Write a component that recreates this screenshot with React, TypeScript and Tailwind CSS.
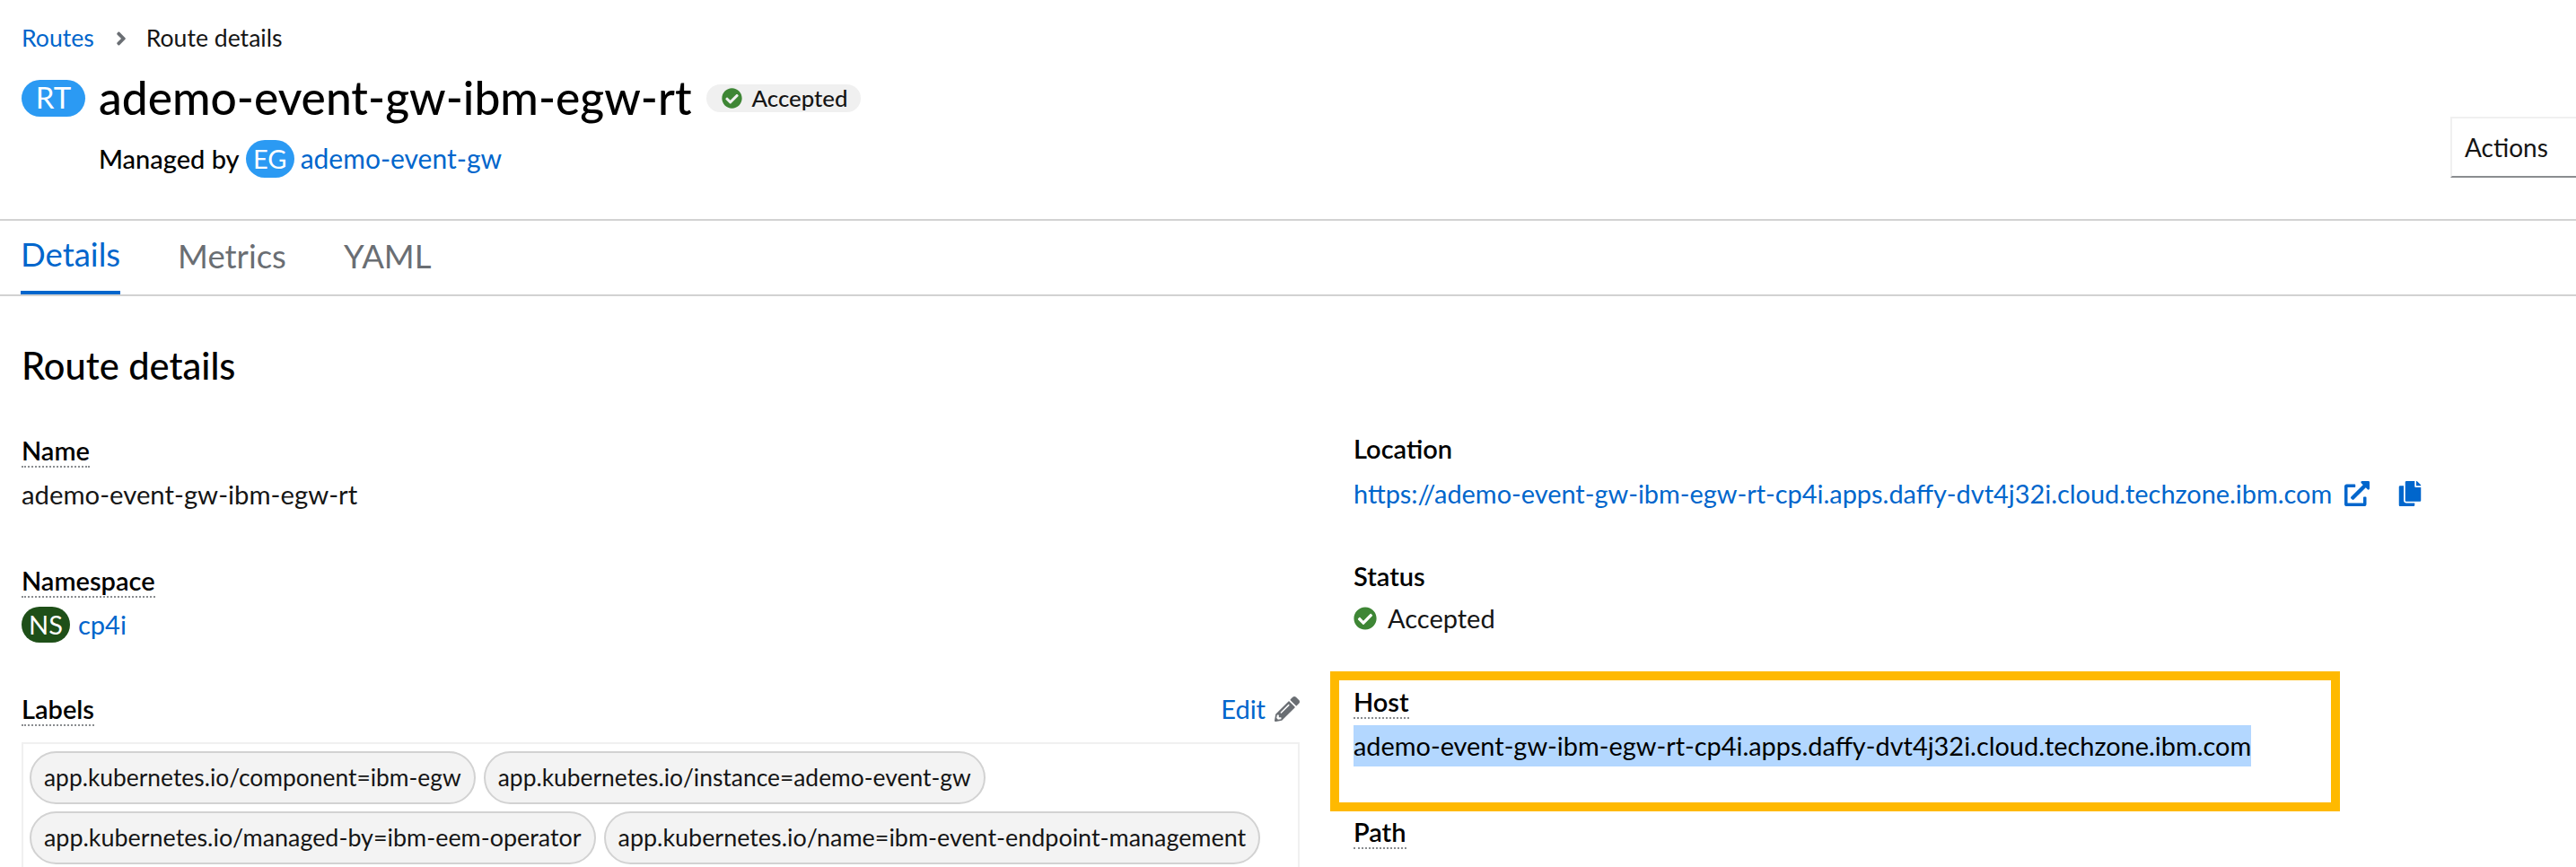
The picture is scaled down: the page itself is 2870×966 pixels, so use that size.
import React from 'react';
import { FaAngleRight, FaCheckCircle, FaCopy, FaExternalLinkAlt, FaPencilAlt } from 'react-icons/fa';

const Term: React.FC<{ children: React.ReactNode }> = ({ children }) => (
  <div className="h-[38px]">
    <span className="inline-block h-[34px] border-b-2 border-dotted border-[#8a8d90] text-[29px] font-semibold leading-[30px] text-black">
      {children}
    </span>
  </div>
);

const Badge: React.FC<{ text: string; className: string }> = ({ text, className }) => (
  <span className={`flex shrink-0 items-center justify-center rounded-full text-white ${className}`}>{text}</span>
);

const Chip: React.FC<{ text: string; size: string }> = ({ text, size }) => (
  <span className={`flex h-[59px] items-center rounded-[30px] border-2 border-[#d2d2d2] bg-[#f3f3f3] px-[14px] text-[#151515] ${size}`}>
    {text}
  </span>
);

const App: React.FC = () => {
  return (
    <div className="relative h-[966px] w-full overflow-hidden bg-white font-['Lato',sans-serif] text-[29px] text-[#151515]">
      {/* Page header */}
      <div className="relative h-[246px] border-b-2 border-[#d2d2d2] pl-[24px]">
        <div className="flex h-[84px] items-center pt-[2px] text-[26.6px]">
          <a className="text-[#06c]">Routes</a>
          <FaAngleRight className="ml-[22px] mr-[20px] h-[24px] w-[16px] text-[#6a6e73]" />
          <span>Route details</span>
        </div>
        <div className="flex h-[50px] items-center">
          <Badge text="RT" className="h-[41px] w-[71px] bg-[#2b9af3] text-[33px]" />
          <h1 className="ml-[15px] text-[51.5px] font-medium text-black">ademo-event-gw-ibm-egw-rt</h1>
          <span className="ml-[16px] flex h-[31px] w-[172px] items-center rounded-full bg-[#f0f0f0] pl-[17px] text-[25.8px] font-medium">
            <FaCheckCircle className="mr-[11px] h-[23px] w-[23px] text-[#3e8635]" />
            Accepted
          </span>
        </div>
        <div className="mt-[20px] flex items-center pl-[86px]">
          <span className="font-medium text-black">Managed by</span>
          <Badge text="EG" className="mx-[7px] h-[42px] w-[54px] bg-[#2b9af3] text-[29px]" />
          <a className="text-[30px] text-[#06c]">ademo-event-gw</a>
        </div>
        <button className="absolute right-0 top-[130px] flex h-[68px] w-[140px] items-center border-2 border-r-0 border-[#f0f0f0] border-b-[#8a8d90] pl-[14px] text-[28px]">
          Actions
        </button>
      </div>

      {/* Tabs */}
      <div className="flex h-[84px] gap-[64px] border-b-2 border-[#d2d2d2] pl-[23px] text-[36.5px] text-[#6a6e73]">
        <a className="flex h-[82px] items-center border-b-4 border-[#06c] pb-[4px] text-[#06c]">Details</a>
        <a className="flex h-[82px] items-center pb-[4px]">Metrics</a>
        <a className="flex h-[82px] items-center pb-[4px]">YAML</a>
      </div>

      {/* Details */}
      <div className="px-[24px] pt-[50px]">
        <h2 className="h-[70px] text-[41.6px] font-medium leading-[54px] text-black">Route details</h2>
        <div className="mt-[30px] grid grid-cols-[1424px_1fr] gap-x-[60px]">
          <div>
            <div className="h-[145px]">
              <Term>Name</Term>
              <div className="mt-[11px] text-[29.3px]">ademo-event-gw-ibm-egw-rt</div>
            </div>
            <div className="h-[143px]">
              <Term>Namespace</Term>
              <div className="mt-[11px] flex items-center">
                <Badge text="NS" className="h-[40px] w-[54px] bg-[#1e4f18] text-[29px]" />
                <a className="ml-[9px] text-[#06c]">cp4i</a>
              </div>
            </div>
            <div className="flex justify-between">
              <Term>Labels</Term>
              <a className="mt-[5px] flex h-[34px] items-center text-[#06c]">
                Edit
                <FaPencilAlt className="ml-[10px] h-[28px] w-[28px] text-[#6a6e73]" />
              </a>
            </div>
            <div className="mt-[20px] flex h-[200px] flex-wrap content-start gap-x-[9px] gap-y-[8px] border-2 border-[#f0f0f0] py-[8px] pl-[7px]">
              <Chip size="text-[26.4px]" text="app.kubernetes.io/component=ibm-egw" />
              <Chip size="text-[26.4px]" text="app.kubernetes.io/instance=ademo-event-gw" />
              <Chip size="text-[26.9px]" text="app.kubernetes.io/managed-by=ibm-eem-operator" />
              <Chip size="text-[26.9px]" text="app.kubernetes.io/name=ibm-event-endpoint-management" />
            </div>
          </div>
          <div>
            <div className="h-[142px]">
              <div className="h-[38px] font-semibold leading-[40px] text-black">Location</div>
              <div className="mt-[10px] flex items-center text-[#06c]">
                <a className="text-[28.9px]">https://ademo-event-gw-ibm-egw-rt-cp4i.apps.daffy-dvt4j32i.cloud.techzone.ibm.com</a>
                <FaExternalLinkAlt className="ml-[14px] h-[28px] w-[28px]" />
                <FaCopy className="ml-[32px] h-[28px] w-[26px]" />
              </div>
            </div>
            <div className="h-[138px]">
              <div className="h-[38px] font-semibold leading-[40px] text-black">Status</div>
              <div className="mt-[7px] flex items-center">
                <FaCheckCircle className="mr-[12px] h-[26px] w-[26px] text-[#3e8635]" />
                Accepted
              </div>
            </div>
            <div className="h-[145px]">
              <Term>Host</Term>
              <div className="mt-[10px] flex">
                <span className="flex h-[46px] items-center bg-[#b3d7ff] text-[28.9px] text-black">
                  ademo-event-gw-ibm-egw-rt-cp4i.apps.daffy-dvt4j32i.cloud.techzone.ibm.com
                </span>
              </div>
            </div>
            <Term>Path</Term>
          </div>
        </div>
      </div>

      {/* Callout drawn over the Host field */}
      <div className="absolute left-[1482px] top-[748px] h-[156px] w-[1125px] border-[10px] border-[#ffb900]" />
    </div>
  );
};

export default App;
